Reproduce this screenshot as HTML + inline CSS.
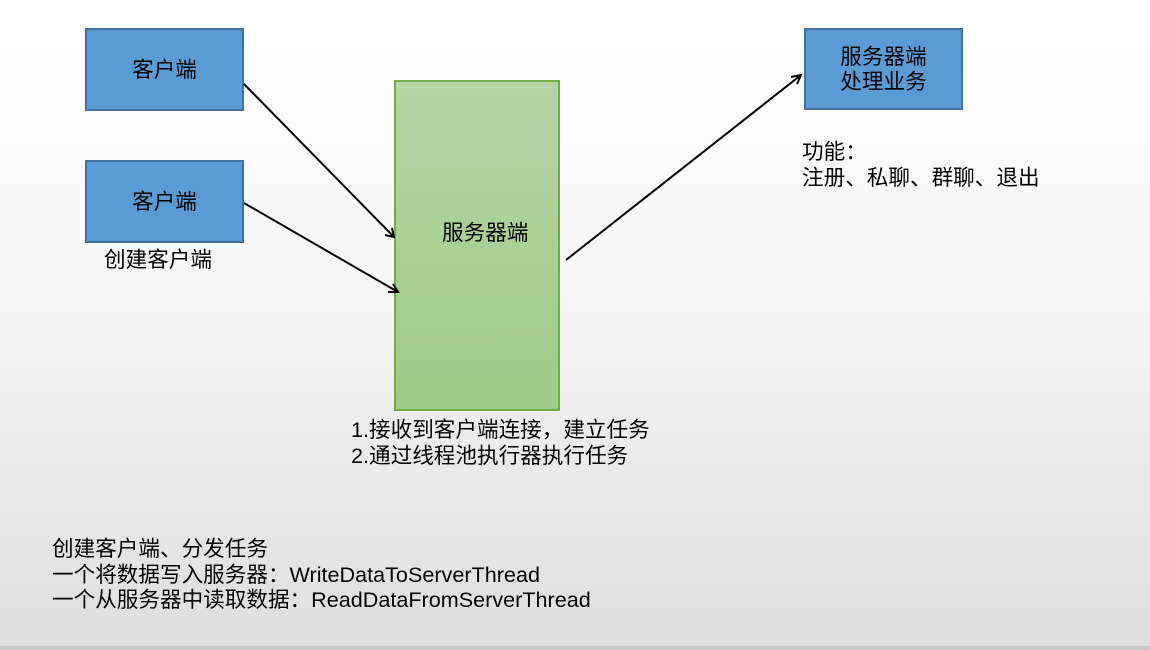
<!DOCTYPE html>
<html><head><meta charset="utf-8"><style>
body{margin:0;width:1150px;height:650px;overflow:hidden;position:relative;background:linear-gradient(#ffffff 0%,#f6f6f6 45%,#dedede 100%);font-family:"Liberation Sans","Noto Sans CJK SC",sans-serif;color:#000}
.b{position:absolute;box-sizing:border-box;background:#5b9bd5;border:2px solid #41719c;display:flex;align-items:center;justify-content:center;text-align:center;font-size:21.6px;line-height:25px}
.t{position:absolute;font-size:21.6px;line-height:25.5px;white-space:nowrap}
</style></head><body>
<div class="b" style="left:85px;top:28px;width:159px;height:83px">客户端</div>
<div class="b" style="left:85px;top:160px;width:159px;height:83px">客户端</div>
<div class="b" style="left:804px;top:28px;width:159px;height:82px">服务器端<br>处理业务</div>
<div style="position:absolute;left:394px;top:80px;width:166px;height:331px;box-sizing:border-box;border:2px solid #70ad47;background:linear-gradient(#b5d5a5,#a0ca88)"></div>
<div class="t" style="left:442px;top:220px">服务器端</div>
<div class="t" style="left:104px;top:247px">创建客户端</div>
<div class="t" style="left:351px;top:417px">1.接收到客户端连接，建立任务<br>2.通过线程池执行器执行任务</div>
<div class="t" style="left:802px;top:139px">功能：<br>注册、私聊、群聊、退出</div>
<div class="t" style="left:52px;top:536px">创建客户端、分发任务<br>一个将数据写入服务器：WriteDataToServerThread<br>一个从服务器中读取数据：ReadDataFromServerThread</div>
<div style="position:absolute;left:0;top:646px;width:1150px;height:4px;background:#c8c8c8"></div>
<svg style="position:absolute;left:0;top:0" width="1150" height="650">
<g stroke="#000" stroke-width="2" fill="none">
<line x1="244" y1="84" x2="394" y2="237"/>
<polyline points="385,235 394,237 392,228"/>
<line x1="244" y1="203" x2="398" y2="292"/>
<polyline points="388,292 398,292 393,284"/>
<line x1="566" y1="260" x2="801" y2="75"/>
<polyline points="791,77 801,75 797,84"/>
</g></svg>
</body></html>
